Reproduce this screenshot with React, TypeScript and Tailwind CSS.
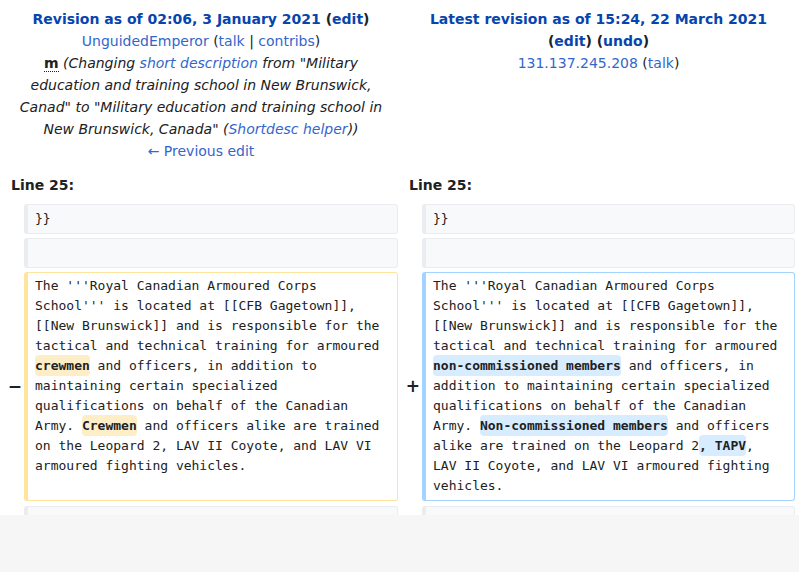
import React from "react";

const sans = { fontFamily: '"DejaVu Sans", sans-serif' };
const mono = { fontFamily: '"DejaVu Sans Mono", monospace' };

function Del({ children }: { children: React.ReactNode }) {
  return <span className="bg-[#feeec8] rounded-[4px] py-[3px] font-bold">{children}</span>;
}
function Add({ children }: { children: React.ReactNode }) {
  return <span className="bg-[#d8ecff] rounded-[4px] py-[3px] font-bold">{children}</span>;
}

function Context({ text }: { text: string }) {
  return (
    <div
      className="bg-[#f8f9fa] border border-[#eaecf0] border-l-4 rounded-[3px] pl-[7px] pr-[14px] py-[4px] h-[30px] text-[13px] leading-[20px] text-[#202122]"
      style={mono}
    >
      {text}
    </div>
  );
}

export default function App() {
  return (
    <div className="w-[799px] h-[572px] bg-[#f6f6f6] overflow-hidden" style={sans}>
      <div className="bg-white h-[515px] overflow-hidden px-[4px] pt-[4px] text-[#202122]">
        {/* header row */}
        <div className="flex gap-[4px]">
          <div className="w-[394px] text-center text-[14px] leading-[22px] py-[4px]">
            <div className="font-bold">
              <a className="text-[#0645ad]">Revision as of 02:06, 3 January 2021</a> (<a className="text-[#0645ad]">edit</a>)
            </div>
            <div>
              <a className="text-[#3366cc]">UnguidedEmperor</a> (<a className="text-[#3366cc]">talk</a> | <a className="text-[#3366cc]">contribs</a>)
            </div>
            <div className="px-[8px]">
              <abbr className="font-bold no-underline border-b border-dotted border-[#202122]">m</abbr>{" "}
              <span className="italic">
                (Changing <a className="text-[#3366cc]">short description</a> from "Military
                <br />
                education and training school in New Brunswick,
                <br />
                Canad" to "Military education and training school in
                <br />
                New Brunswick, Canada" (<a className="text-[#3366cc]">Shortdesc helper</a>))
              </span>
            </div>
            <div>
              <a className="text-[#3366cc]">← Previous edit</a>
            </div>
          </div>
          <div className="w-[393px] text-center text-[14px] leading-[22px] py-[4px]">
            <div className="font-bold">
              <a className="text-[#0645ad]">Latest revision as of 15:24, 22 March 2021</a>
            </div>
            <div className="font-bold">
              (<a className="text-[#0645ad]">edit</a>) (<a className="text-[#0645ad]">undo</a>)
            </div>
            <div>
              <a className="text-[#3366cc]">131.137.245.208</a> (<a className="text-[#3366cc]">talk</a>)
            </div>
          </div>
        </div>

        {/* line numbers */}
        <div className="flex gap-[4px] mt-[4px]">
          <div className="w-[394px] font-bold text-[14px] leading-[22px] py-[4px] pl-[7px]">Line 25:</div>
          <div className="w-[393px] font-bold text-[14px] leading-[22px] py-[4px] pl-[7px]">Line 25:</div>
        </div>

        {/* context rows */}
        {["}}", ""].map((t, i) => (
          <div key={i} className="flex mt-[4px]">
            <div className="w-[18px]" />
            <div className="w-[374px] ml-[2px]">
              <Context text={t} />
            </div>
            <div className="w-[18px] ml-[4px]" />
            <div className="w-[373px] ml-[2px]">
              <Context text={t} />
            </div>
          </div>
        ))}

        {/* changed row */}
        <div className="flex mt-[4px] items-stretch">
          <div className="w-[18px] flex items-center justify-end text-[17px] font-bold pr-[0px]">−</div>
          <div
            className="w-[374px] ml-[2px] border border-[#ffe49c] border-l-4 rounded-[3px] pl-[7px] pr-[14px] pt-[3px] pb-[4px] text-[13px] leading-[20px] text-[#202122] h-[229px]"
            style={mono}
          >
            The '''Royal Canadian Armoured Corps School''' is located at [[CFB Gagetown]], [[New Brunswick]] and is responsible for the tactical and technical training for armoured <Del>crewmen</Del> and officers, in addition to maintaining certain specialized qualifications on behalf of the Canadian Army. <Del>Crewmen</Del> and officers alike are trained on the Leopard 2, LAV II Coyote, and LAV VI armoured fighting vehicles.
          </div>
          <div className="w-[18px] ml-[4px] flex items-center justify-end text-[17px] font-bold pr-[0px]">+</div>
          <div
            className="w-[373px] ml-[2px] border border-[#a3d3ff] border-l-4 rounded-[3px] pl-[7px] pr-[14px] pt-[3px] pb-[4px] text-[13px] leading-[20px] text-[#202122] h-[229px]"
            style={mono}
          >
            The '''Royal Canadian Armoured Corps School''' is located at [[CFB Gagetown]], [[New Brunswick]] and is responsible for the tactical and technical training for armoured <Add>non-commissioned members</Add> and officers, in addition to maintaining certain specialized qualifications on behalf of the Canadian Army. <Add>Non-commissioned members</Add> and officers alike are trained on the Leopard 2<Add>, TAPV</Add>, LAV II Coyote, and LAV VI armoured fighting vehicles.
          </div>
        </div>

        {/* next context row (cut) */}
        <div className="flex mt-[5px]">
          <div className="w-[18px]" />
          <div className="w-[374px] ml-[2px]">
            <Context text="" />
          </div>
          <div className="w-[18px] ml-[4px]" />
          <div className="w-[373px] ml-[2px]">
            <Context text="" />
          </div>
        </div>
      </div>
    </div>
  );
}
